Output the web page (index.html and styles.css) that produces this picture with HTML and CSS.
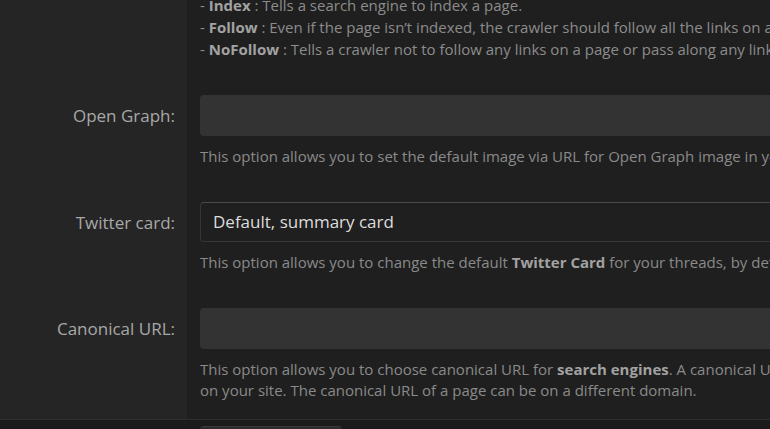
FILE: index.html
```
<html>
<meta http-equiv="Content-Type" content="text/html; charset=utf-8" />

<head>
    <link rel="stylesheet" href="styles.css">
</head>

<body>

    <div id="form">
        <div class="row first">
            <div class="label"></div>
            <div class="field">
                <div class="list">
                    <div>- <b>Index</b> : Tells a search engine to index a page.</div>
                    <div>- <b>Follow</b> : Even if the page isn’t indexed, the crawler should follow all the links on a page and pass equity to the linked pages.</div>
                    <div>- <b>NoFollow</b> : Tells a crawler not to follow any links on a page or pass along any link equity.</div>
                </div>
            </div>
        </div>

        <div class="row">
            <div class="label">Open Graph:</div>
            <div class="field">
                <div class="input"></div>
                <div class="explain">This option allows you to set the default image via URL for Open Graph image in your threads.</div>
            </div>
        </div>

        <div class="row">
            <div class="label">Twitter card:</div>
            <div class="field">
                <div class="select">Default, summary card</div>
                <div class="explain">This option allows you to change the default <b>Twitter Card</b> for your threads, by default it is summary card.</div>
            </div>
        </div>

        <div class="row last">
            <div class="label">Canonical URL:</div>
            <div class="field">
                <div class="input"></div>
                <div class="explain">This option allows you to choose canonical URL for <b>search engines</b>. A canonical URL is the URL of the page that search engines think is most representative<br />on your site. The canonical URL of a page can be on a different domain.</div>
            </div>
        </div>

        <div id="submit">
            <button>Save</button>
        </div>
    </div>

</body>

</html>
```

FILE: styles.css
```
body,
div {
    margin: 0px;
    padding: 0px;
}

body {
    background: #1f1f1f;
    font-family: "Open Sans", "Noto Sans", sans-serif;
    overflow: hidden;
}

#form {
    width: 1600px;
}

.row {
    display: flex;
}

.row .label {
    width: 175px;
    flex: none;
    padding: 17px 12px 18px 0px;
    background: #252525;
    color: #a8a8a8;
    font-size: 17px;
    text-align: right;
    line-height: 41px;
    white-space: nowrap;
}

.row .field {
    flex: 1;
    padding: 17px 13px 18px 13px;
}

.row.first .label,
.row.first .field {
    padding-top: 0px;
    margin-top: -6px;
}

.list {
    color: #8c8c8c;
    font-size: 15px;
    line-height: 22px;
}

.list b,
.explain b {
    color: #a2a2a2;
}

.input {
    height: 41px;
    background: #333333;
    border-radius: 4px;
}

.select {
    height: 38px;
    border: 1px solid #363636;
    border-top-color: #4a4a4a;
    border-radius: 4px;
    padding-left: 12px;
    color: #dcdcdc;
    font-size: 17px;
    line-height: 38px;
}

.explain {
    margin-top: 10px;
    color: #8a8a8a;
    font-size: 15px;
    line-height: 21px;
}

#submit {
    border-top: 1px solid #2e2e2e;
    background: #1b1b1b;
    padding: 6px 0px 0px 200px;
    height: 40px;
}

#submit button {
    width: 142px;
    height: 36px;
    border: none;
    border-top: 1px solid #3a3a3a;
    border-radius: 4px;
    background: #2b2b2b;
    color: #cccccc;
}
```
